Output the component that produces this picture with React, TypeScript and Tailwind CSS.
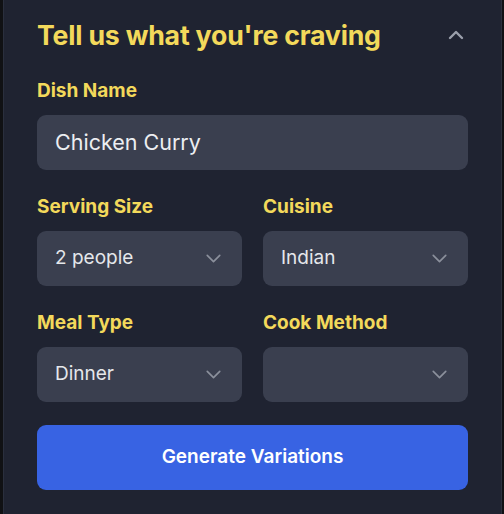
import { ChevronDown, ChevronUp } from 'lucide-react'

function Field({ label, children }: { label: string; children: React.ReactNode }) {
  return (
    <div className="flex flex-col">
      <label className="text-[19px] font-bold text-[#f3d95b] leading-[24px] mb-[12px]">{label}</label>
      {children}
    </div>
  )
}

function Select({ value }: { value: string }) {
  return (
    <div className="h-[55px] rounded-[9px] bg-[#3a3f4f] flex items-center justify-between pl-[18px] pr-[16px]">
      <span className="text-[19px] text-[#e5e7eb]">{value}</span>
      <ChevronDown className="w-[25px] h-[25px] text-[#8b909c]" strokeWidth={1.6} />
    </div>
  )
}

export default function App() {
  return (
    <div className="w-[504px] h-[514px] bg-[#101114] pl-[3px] pr-[2px]" style={{ fontFamily: 'Inter, "Noto Sans", sans-serif' }}>
      <div className="h-full bg-[#1f2331] border-l border-r border-[#2a2f3d] px-[33px] pt-[18px]">
        <div className="flex items-center justify-between h-[34px]">
          <h2 className="text-[26.7px] font-bold text-[#f3d95b] tracking-[-0.2px]">Tell us what you're craving</h2>
          <ChevronUp className="w-[24px] h-[24px] text-[#9a9fab]" strokeWidth={2.4} />
        </div>

        <div className="mt-[27px]">
          <Field label="Dish Name">
            <div className="h-[55px] rounded-[9px] bg-[#3a3f4f] flex items-center px-[18px]">
              <span className="text-[21.5px] text-[#eceef2]">Chicken Curry</span>
            </div>
          </Field>
        </div>

        <div className="grid grid-cols-2 gap-x-[21px] mt-[25px]">
          <Field label="Serving Size">
            <Select value="2 people" />
          </Field>
          <Field label="Cuisine">
            <Select value="Indian" />
          </Field>
        </div>

        <div className="grid grid-cols-2 gap-x-[21px] mt-[25px]">
          <Field label="Meal Type">
            <Select value="Dinner" />
          </Field>
          <Field label="Cook Method">
            <Select value="" />
          </Field>
        </div>

        <button className="mt-[23px] w-full h-[65px] rounded-[9px] bg-[#3863e3] text-white text-[19px] font-semibold">
          Generate Variations
        </button>
      </div>
    </div>
  )
}
